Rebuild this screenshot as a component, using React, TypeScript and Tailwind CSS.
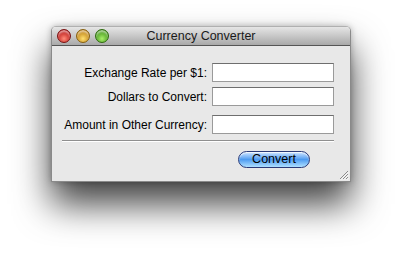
import React from "react";

function Light({ from, to, border }: { from: string; to: string; border: string }) {
  return (
    <span
      className="block w-[14px] h-[14px] rounded-full"
      style={{
        background: `radial-gradient(circle at 50% 72%, ${to} 0%, ${from} 78%)`,
        border: `1px solid ${border}`,
        boxShadow: "inset 0 2px 2px rgba(255,255,255,0.6)",
      }}
    />
  );
}

function Row({ label, className = "" }: { label: string; className?: string }) {
  return (
    <div className={`flex items-center justify-end gap-[5px] ${className}`}>
      <span className="text-[12px] text-black leading-none whitespace-nowrap">{label}</span>
      <input className="w-[122px] h-[19px] bg-white border border-[#9a9a9a] border-t-[#6e6e6e] outline-none" />
    </div>
  );
}

export default function App() {
  return (
    <div className="w-[403px] h-[257px] bg-white overflow-hidden pt-[26px] pl-[51px]" style={{ fontFamily: '"Liberation Sans", Arial, sans-serif' }}>
      <div className="w-[300px] h-[156px] flex flex-col rounded-t-[5px] shadow-[0_22px_36px_rgba(0,0,0,0.75),0_0_6px_rgba(0,0,0,0.25)] border border-[#8a8a8a] border-t-[#b0b0b0]">
        <div className="h-[19px] flex items-center relative rounded-t-[4px] bg-gradient-to-b from-[#e6e6e6] to-[#a9a9a9] border-b border-[#555]">
          <div className="flex items-center gap-[5px] pl-[5px]">
            <Light from="#b50d0d" to="#ff8c7a" border="#7a1010" />
            <Light from="#b8780a" to="#ffe070" border="#87600d" />
            <Light from="#3a8f12" to="#a8ef6a" border="#2d6b0c" />
          </div>
          <div className="absolute inset-0 flex items-center justify-center text-[12.5px] text-[#1a1a1a]">Currency Converter</div>
        </div>
        <div className="flex-1 bg-[#e8e8e8] flex flex-col pt-[17px] pr-[16px] pl-[10px] relative">
          <Row label="Exchange Rate per $1:" />
          <Row label="Dollars to Convert:" className="mt-[5px]" />
          <Row label="Amount in Other Currency:" className="mt-[9px]" />
          <div className="mt-[6px] h-[2px] border-t border-[#8f8f8f] border-b border-b-white" />
          <div className="flex justify-end mt-[9px] pr-[24px]">
            <button className="w-[72px] h-[17px] rounded-full border border-[#2a3a78] text-[12.5px] leading-none text-black flex items-center justify-center bg-gradient-to-b from-[#cfe6ff] via-[#4d9bf0] to-[#aee0ff] shadow-[inset_0_1px_1px_rgba(255,255,255,0.8)]">
              Convert
            </button>
          </div>
          <svg className="absolute right-[1px] bottom-[1px]" width="11" height="11" viewBox="0 0 11 11">
            <path d="M10 2 L2 10 M10 5 L5 10 M10 8 L8 10" stroke="#8a8a8a" strokeWidth="1" />
            <path d="M10.8 2.8 L2.8 10.8 M10.8 5.8 L5.8 10.8 M10.8 8.8 L8.8 10.8" stroke="#ffffff" strokeWidth="0.8" />
          </svg>
        </div>
      </div>
    </div>
  );
}
